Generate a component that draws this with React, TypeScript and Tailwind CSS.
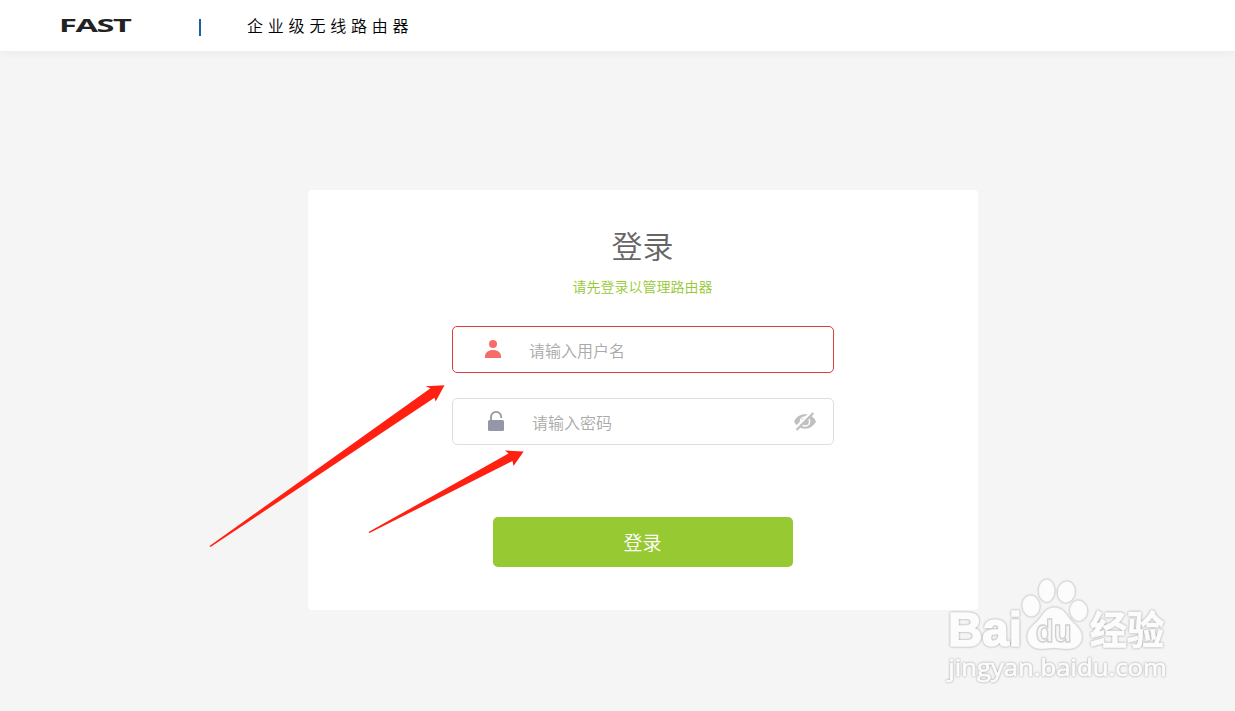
import React, { useState } from 'react';

const UserIcon = () => (
  <svg className="mb-[2px] h-[18px] w-4" viewBox="0 0 16 18" fill="#f76b6b">
    <circle cx="8" cy="4" r="4" />
    <path d="M0 18v-1.500C0 12.500 3.400 10 8 10s8 2.500 8 6.500V18z" />
  </svg>
);

const LockIcon = () => (
  <svg className="mb-[2px] h-5 w-4" viewBox="0 0 16 20" fill="none">
    <rect x="0" y="9" width="16" height="11" rx="1.500" fill="#9597a8" />
    <path d="M3 10V6a5 5 0 0 1 10.200 0v1" stroke="#9597a8" strokeWidth="1.800" />
  </svg>
);

const EyeOffIcon = () => (
  <svg className="h-[19px] w-[22px]" viewBox="0 0 22 19" fill="none">
    <path d="M0 9.500C2.500 4.800 6.500 2.300 11 2.300s8.500 2.500 11 7.200c-2.500 4.700-6.500 7.200-11 7.200S2.500 14.200 0 9.500z" fill="#bfbfbf" />
    <circle cx="11" cy="9.500" r="4.600" stroke="#fff" strokeWidth="1.500" />
    <path d="M1.800 17L18 .5" stroke="#fff" strokeWidth="4" />
    <path d="M2.500 18L19.300 1" stroke="#bfbfbf" strokeWidth="2.200" />
  </svg>
);

const Watermark = () => (
  <svg
    className="absolute left-[930px] top-[570px] h-[130px] w-[250px] drop-shadow-[0_0_1px_rgba(0,0,0,0.38)]"
    viewBox="0 0 750 390"
    fill="#fcfcfc"
    stroke="#fcfcfc"
    strokeWidth="2"
    strokeLinejoin="round"
  >
    <text x="54" y="229" fontSize="146" fontWeight="bold" fontFamily="Liberation Sans, sans-serif" textLength="222" lengthAdjust="spacingAndGlyphs" strokeWidth="5">Bai</text>
    <ellipse cx="303" cy="108" rx="25" ry="31" transform="rotate(-8 303 108)" />
    <ellipse cx="350" cy="62" rx="23" ry="33" />
    <ellipse cx="409" cy="66" rx="25" ry="31" transform="rotate(10 409 66)" />
    <ellipse cx="446" cy="122" rx="25" ry="30" transform="rotate(-8 446 122)" />
    <path d="M372 113c24 0 34 16 44 30 12 17 39 31 39 57 0 26-22 37-45 36-14 0-26-3-38-3s-24 3-38 3c-24 0-41-13-41-36 0-27 26-40 38-56 11-15 20-31 41-31z" />
    <text x="317" y="215" fontSize="92" fontWeight="bold" fontFamily="Liberation Sans, sans-serif" textLength="108" lengthAdjust="spacingAndGlyphs" fill="#f6f6f6" stroke="#cfcfcf" strokeWidth="4">du</text>
    <text x="479" y="222" fontSize="116" fontWeight="bold" fontFamily="Noto Sans CJK SC, sans-serif" textLength="224" lengthAdjust="spacingAndGlyphs">经验</text>
    <text x="55" y="318" fontSize="72" fontWeight="400" fontFamily="Open Sans, sans-serif" textLength="655" lengthAdjust="spacingAndGlyphs" strokeWidth="2">jingyan.baidu.com</text>
  </svg>
);

// Red arrows that point at the two inputs
const Arrows = () => (
  <svg className="pointer-events-none absolute left-0 top-0 h-[711px] w-[1235px]" viewBox="0 0 1235 711" fill="#ff2012">
    <path d="M209.500 546L430.500 388.300 425.500 386.300 444.500 385.300 435.700 401.500 434.500 397.800 210.500 547z" />
    <path d="M368.500 532L508.500 453.500 505 450.500 523.700 451.500 513.500 466 512.500 461 369.500 533z" />
  </svg>
);

export default function App() {
  const [username, setUsername] = useState('');
  const [password, setPassword] = useState('');

  return (
    <div className="relative h-[711px] w-full overflow-hidden bg-[#f5f5f5] font-['Noto_Sans_CJK_SC',sans-serif] font-[350]">
      {/* Header */}
      <header className="flex h-[51px] items-center bg-white pl-[60px] shadow-[0_2px_10px_rgba(0,0,0,0.05)]">
        <svg className="h-[30px] w-[72px] overflow-visible" viewBox="0 0 72 30">
          <text x="-1" y="21" fontSize="18.500" fontWeight="bold" fontFamily="Open Sans, sans-serif" textLength="71.500" lengthAdjust="spacingAndGlyphs" letterSpacing="-0.800" fill="#222">FAST</text>
        </svg>
        <div className="ml-[67px] mt-1 h-[17px] w-[2px] bg-[#1763a6]" />
        <h1 className="-mt-px ml-[46px] text-base leading-6 tracking-[4.800px] text-black">企业级无线路由器</h1>
      </header>

      {/* Login card */}
      <main className="flex w-[1286px] justify-center pt-[139px]">
        <div className="flex h-[420px] w-[670px] flex-col items-center rounded bg-white pt-[34px]">
          <h2 className="mr-px text-[31px] leading-[42px] text-[#666]">登录</h2>
          <p className="mr-px mt-[9px] text-sm leading-[22px] text-[#95c932]">请先登录以管理路由器</p>

          <label className="mt-[29px] flex h-[47px] w-[382px] items-center rounded-[5px] border border-[#dc3c3c] pl-8">
            <UserIcon />
            <input
              className="ml-7 w-60 text-base leading-6 outline-none placeholder:text-[#aaa]"
              placeholder="请输入用户名"
              value={username}
              onChange={(e) => setUsername(e.target.value)}
            />
          </label>

          <label className="mt-[25px] flex h-[47px] w-[382px] items-center rounded-[5px] border border-[#dedede] pl-[35px] pr-[17px]">
            <LockIcon />
            <input
              type="password"
              className="ml-7 min-w-0 flex-1 text-base leading-6 outline-none placeholder:text-[#aaa]"
              placeholder="请输入密码"
              value={password}
              onChange={(e) => setPassword(e.target.value)}
            />
            <EyeOffIcon />
          </label>

          <button className="mt-[72px] h-[50px] w-[300px] rounded-[5px] bg-[#96c932] pr-px text-[19px] text-white">
            登录
          </button>
        </div>
      </main>

      <Arrows />
      <Watermark />
    </div>
  );
}
